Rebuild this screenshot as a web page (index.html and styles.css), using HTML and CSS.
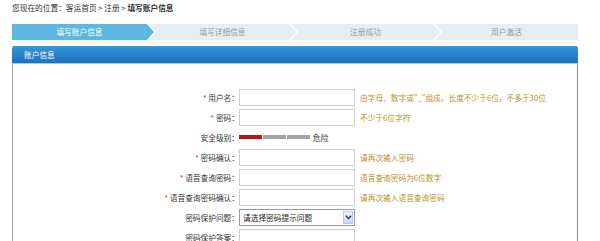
FILE: index.html
```html
<!DOCTYPE html>
<html lang="zh-CN">
<head>
<meta charset="utf-8">
<title>填写账户信息</title>
<link rel="stylesheet" href="styles.css">
</head>
<body>
<div class="page">
  <div class="crumb">您现在的位置：客运首页 &gt; 注册 &gt; <b>填写账户信息</b></div>
  <div class="steps">
    <div class="step step-first active">填写账户信息</div>
    <div class="step step-mid s2">填写详细信息</div>
    <div class="step step-mid s3">注册成功</div>
    <div class="step step-last">用户激活</div>
  </div>
  <div class="panel">
    <div class="panel-head">账户信息</div>
    <div class="panel-body">
      <div class="row">
        <div class="label"><span class="req">*</span> 用户名：</div>
        <div class="input"></div>
        <div class="hint">由字母、数字或"_"组成，长度不少于6位，不多于30位</div>
      </div>
      <div class="row">
        <div class="label"><span class="req">*</span> 密码：</div>
        <div class="input"></div>
        <div class="hint">不少于6位字符</div>
      </div>
      <div class="row">
        <div class="label">安全级别：</div>
        <div class="meter"><span class="seg seg-on"></span><span class="seg"></span><span class="seg"></span></div>
        <div class="level">危险</div>
      </div>
      <div class="row">
        <div class="label"><span class="req">*</span> 密码确认：</div>
        <div class="input"></div>
        <div class="hint">请再次输入密码</div>
      </div>
      <div class="row">
        <div class="label"><span class="req">*</span> 语音查询密码：</div>
        <div class="input"></div>
        <div class="hint">语音查询密码为6位数字</div>
      </div>
      <div class="row">
        <div class="label"><span class="req">*</span> 语音查询密码确认：</div>
        <div class="input"></div>
        <div class="hint">请再次输入语音查询密码</div>
      </div>
      <div class="row">
        <div class="label">密码保护问题：</div>
        <div class="select"><span class="select-text">请选择密码提示问题</span><span class="select-btn"><svg width="7" height="5" viewBox="0 0 7 5"><path d="M0.8 0.8 L3.5 3.6 L6.2 0.8" fill="none" stroke="#2a4f9a" stroke-width="1.5"/></svg></span></div>
      </div>
      <div class="row">
        <div class="label">密码保护答案：</div>
        <div class="input"></div>
      </div>
    </div>
  </div>
</div>
</body>
</html>
```
FILE: styles.css
```css
html, body {
  margin: 0;
  padding: 0;
  background: #ffffff;
}
body {
  font-family: "Noto Sans CJK SC", "Liberation Sans", sans-serif;
  font-size: 7.7px;
  color: #333333;
  overflow: hidden;
}
.page {
  padding: 0 22px 0 12px;
  width: 566px;
}
.crumb {
  height: 16px;
  line-height: 16px;
  color: #333;
}
.crumb b {
  font-weight: bold;
}
.steps {
  display: flex;
  margin-top: 8px;
  height: 16px;
}
.step {
  height: 16px;
  line-height: 16px;
  text-align: center;
  background: #e6edf4;
  color: #9a9a9a;
  flex: none;
}
.step-first {
  width: 142px;
  padding-right: 7px;
  box-sizing: border-box;
  clip-path: polygon(0 0, calc(100% - 7px) 0, 100% 50%, calc(100% - 7px) 100%, 0 100%);
}
.active {
  background: #5cb8e2;
  color: #ffffff;
}
.step-mid {
  margin-left: -5px;
  clip-path: polygon(0 0, calc(100% - 7px) 0, 100% 50%, calc(100% - 7px) 100%, 0 100%, 7px 50%);
}
.s2 { width: 147px; }
.s3 { width: 149px; }
.step-last {
  width: 143px;
  margin-left: -5px;
  clip-path: polygon(0 0, 100% 0, 100% 100%, 0 100%, 7px 50%);
}
.panel {
  margin-top: 6px;
  border-left: 1px solid #a8a8a8;
  border-right: 1px solid #8a8a8a;
  border-radius: 3px 3px 0 0;
  height: 200px;
}
.panel-head {
  height: 17px;
  line-height: 17px;
  padding-left: 12px;
  color: #ffffff;
  background: linear-gradient(#3596da, #1f72bb);
  border-bottom: 1px solid #8fcdf1;
  border-radius: 3px 3px 0 0;
  margin: 0 -1px;
}
.panel-body {
  padding-top: 23px;
}
.row {
  display: flex;
  align-items: center;
  height: 20px;
}
.label {
  width: 226px;
  flex: none;
  text-align: right;
  color: #333;
}
.req {
  color: #cc1111;
}
.input {
  width: 114px;
  height: 15px;
  border: 1px solid #cfcfcf;
  background: #fff;
  flex: none;
}
.hint {
  margin-left: 5px;
  color: #b8912f;
}
.meter {
  display: flex;
  gap: 1px;
  width: 71px;
  height: 4px;
  flex: none;
}
.seg {
  flex: 1;
  background: #a3a3a3;
}
.seg-on {
  background: #b3161b;
}
.level {
  margin-left: 3px;
}
.select {
  width: 114px;
  height: 15px;
  border: 1px solid #8f9aae;
  display: flex;
  align-items: center;
  justify-content: space-between;
  flex: none;
  background: #fff;
}
.select-text {
  padding-left: 3px;
  color: #222;
}
.select-btn {
  width: 10px;
  height: 13px;
  margin-right: 1px;
  background: linear-gradient(#eef3fb, #c9d7ee);
  border: 1px solid #b9c7df;
  box-sizing: border-box;
  display: flex;
  align-items: center;
  justify-content: center;
}
```
